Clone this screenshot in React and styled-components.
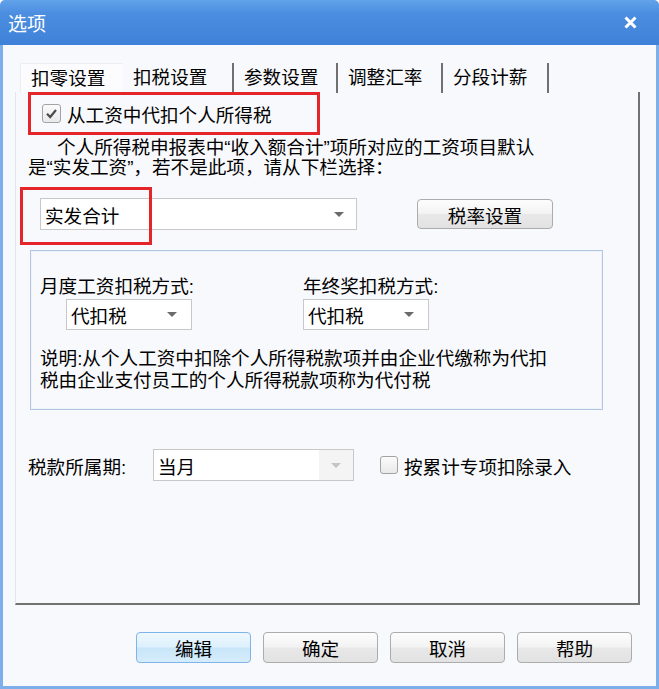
import React from 'react'
import styled, { createGlobalStyle } from 'styled-components'

const GlobalStyle = createGlobalStyle`
  html, body {
    margin: 0;
    padding: 0;
    background: #ffffff;
  }
  body {
    font-family: "Liberation Sans", "Noto Sans CJK SC", sans-serif;
    font-size: 18.6px;
    color: #000;
  }
  * {
    box-sizing: border-box;
  }
`

const Window = styled.div`
  width: 659px;
  height: 689px;
  display: flex;
  flex-direction: column;
  background: #f8f9fc;
  border-radius: 5px 5px 0 0;
  overflow: hidden;
`

const TitleBar = styled.div`
  height: 45px;
  flex: none;
  display: flex;
  align-items: center;
  justify-content: space-between;
  padding: 0 22px 0 8px;
  background: linear-gradient(#62a2ea, #4b8ee0 30%, #3f81d8);
  color: #fff;
  font-size: 19px;
`

const Body = styled.div`
  flex: 1;
  display: flex;
  flex-direction: column;
  border: 3px solid #7db0ea;
  border-top: none;
  padding: 17px 16px 0 12px;
`

const TabStrip = styled.div`
  display: flex;
  height: 30px;
  padding-left: 5px;
`

const Tab = styled.div`
  width: ${(p) => p.$w}px;
  height: 30px;
  line-height: 30px;
  padding-left: 10px;
  white-space: nowrap;
  border-right: ${(p) => (p.$first ? 'none' : '2px solid #707070')};
  border-top: ${(p) => (p.$first ? '1px solid #eceef2' : 'none')};
  border-left: ${(p) => (p.$first ? '1px solid #eceef2' : 'none')};
  background: ${(p) => (p.$first ? '#fcfcfe' : 'transparent')};
  margin-top: 1px;
`

const Panel = styled.div`
  height: 513px;
  display: flex;
  flex-direction: column;
  border-left: 1px solid #e2e5ea;
  border-right: 2px solid #727272;
  border-bottom: 2px solid #727272;
`

const CheckRow = styled.div`
  margin-left: 12px;
  width: 292px;
  height: 43px;
  border: 3px solid #e42529;
  display: flex;
  align-items: center;
  padding-left: 11px;
  gap: 6px;
`

const Box = styled.span`
  width: ${(p) => p.$size}px;
  height: ${(p) => p.$size}px;
  flex: none;
  border: 1px solid #a3a3a3;
  border-radius: 3px;
  background: linear-gradient(#fbfbfb, #e9e9e9);
  display: flex;
  align-items: center;
  justify-content: center;
`

const Intro = styled.p`
  margin: 3px 0 0 12px;
  line-height: 20px;
  text-indent: 29px;
  white-space: nowrap;
`

const ComboRow = styled.div`
  position: relative;
  display: flex;
  align-items: center;
  margin: 20px 0 0 24px;
`

const Highlight = styled.div`
  position: absolute;
  left: ${(p) => p.$x}px;
  top: ${(p) => p.$y}px;
  width: ${(p) => p.$w}px;
  height: ${(p) => p.$h}px;
  border: 3px solid #e42529;
  pointer-events: none;
`

const Combo = styled.div`
  width: ${(p) => p.$w}px;
  height: ${(p) => p.$h}px;
  flex: none;
  display: flex;
  align-items: center;
  padding-left: 4px;
  border: 1px solid #c8c8c8;
  background: #ffffff;
  white-space: nowrap;
  margin-left: ${(p) => p.$indent || 0}px;
`

const ArrowZone = styled.span`
  margin-left: auto;
  width: ${(p) => p.$w}px;
  height: 100%;
  display: flex;
  align-items: center;
  justify-content: center;
  background: ${(p) => (p.$disabled ? '#f4f4f4' : 'transparent')};
`

const Arrow = styled.span`
  width: 0;
  height: 0;
  border-left: 5px solid transparent;
  border-right: 5px solid transparent;
  border-top: 5px solid ${(p) => (p.$disabled ? '#c4c4c4' : '#6b6b6b')};
`

const Button = styled.button`
  width: ${(p) => p.$w}px;
  height: ${(p) => p.$h}px;
  flex: none;
  padding: 0;
  font: inherit;
  color: #000;
  border-radius: 4px;
  border: 1px solid ${(p) => (p.$focus ? '#7eb4ea' : '#acacac')};
  background: ${(p) =>
    p.$focus
      ? 'linear-gradient(#eef8fe, #ddf0fd 48%, #c8e5f9 52%, #d6ecfb)'
      : 'linear-gradient(#fdfdfd, #f3f3f3 48%, #e8e8e8 52%, #e2e2e2)'};
  margin-left: ${(p) => p.$ml || 0}px;
`

const GroupBox = styled.div`
  margin: 20px 0 0 14px;
  width: 573px;
  height: 160px;
  border: 1px solid #b3c7e3;
  box-shadow: inset 0 0 0 1px #eef3fa;
  padding: 25px 0 0 9px;
`

const Columns = styled.div`
  display: grid;
  grid-template-columns: 263px 1fr;
`

const Field = styled.div`
  display: flex;
  flex-direction: column;
  align-items: flex-start;
`

const FieldLabel = styled.div`
  line-height: 22px;
  margin-bottom: 1px;
  white-space: nowrap;
`

const Note = styled.div`
  margin-top: 18px;
  line-height: 22px;
  white-space: nowrap;
`

const BottomRow = styled.div`
  display: flex;
  align-items: center;
  margin: 39px 0 0 12px;
`

const RowLabel = styled.span`
  width: 125px;
  flex: none;
  white-space: nowrap;
`

const CheckOption = styled.label`
  display: flex;
  align-items: center;
  gap: 6px;
  margin-left: 26px;
  white-space: nowrap;
`

const Footer = styled.div`
  display: flex;
  justify-content: flex-end;
  gap: 12px;
  margin-top: 27px;
  padding-right: 8px;
`

const tabs = [
  { name: '扣零设置', w: 103 },
  { name: '扣税设置', w: 111 },
  { name: '参数设置', w: 104 },
  { name: '调整汇率', w: 105 },
  { name: '分段计薪', w: 106 },
]

function Checkbox({ checked, size }) {
  return (
    <Box $size={size}>
      {checked && (
        <svg width="13" height="13" viewBox="0 0 13 13">
          <path d="M2 6.8 L5.2 10 L11 3" fill="none" stroke="#4b4b4b" strokeWidth="2.2" />
        </svg>
      )}
    </Box>
  )
}

function Select({ value, w, h, arrow, indent, disabled }) {
  return (
    <Combo $w={w} $h={h} $indent={indent}>
      {value}
      <ArrowZone $w={arrow} $disabled={disabled}>
        <Arrow $disabled={disabled} />
      </ArrowZone>
    </Combo>
  )
}

export default function App() {
  return (
    <>
      <GlobalStyle />
      <Window>
        <TitleBar>
          <span>选项</span>
          <svg width="13" height="13" viewBox="0 0 13 13">
            <path d="M1.5 1.5 L11.5 11.5 M11.5 1.5 L1.5 11.5" stroke="#fff" strokeWidth="3" />
          </svg>
        </TitleBar>
        <Body>
          <TabStrip>
            {tabs.map((t, i) => (
              <Tab key={t.name} $w={t.w} $first={i === 0}>
                {t.name}
              </Tab>
            ))}
          </TabStrip>
          <Panel>
            <CheckRow>
              <Checkbox checked size={19} />
              <span>从工资中代扣个人所得税</span>
            </CheckRow>
            <Intro>
              个人所得税申报表中“收入额合计”项所对应的工资项目默认
              <br />
              是“实发工资”，若不是此项，请从下栏选择：
            </Intro>
            <ComboRow>
              <Select value="实发合计" w={317} h={32} arrow={34} />
              <Button $w={136} $h={30} $ml={60}>
                税率设置
              </Button>
              <Highlight $x={-20} $y={-11} $w={132} $h={58} />
            </ComboRow>
            <GroupBox>
              <Columns>
                <Field>
                  <FieldLabel>月度工资扣税方式:</FieldLabel>
                  <Select value="代扣税" w={126} h={31} arrow={38} indent={26} />
                </Field>
                <Field>
                  <FieldLabel>年终奖扣税方式:</FieldLabel>
                  <Select value="代扣税" w={126} h={31} arrow={38} />
                </Field>
              </Columns>
              <Note>
                说明:从个人工资中扣除个人所得税款项并由企业代缴称为代扣
                <br />
                税由企业支付员工的个人所得税款项称为代付税
              </Note>
            </GroupBox>
            <BottomRow>
              <RowLabel>税款所属期:</RowLabel>
              <Select value="当月" w={201} h={32} arrow={34} disabled />
              <CheckOption>
                <Checkbox size={18} />
                <span>按累计专项扣除录入</span>
              </CheckOption>
            </BottomRow>
          </Panel>
          <Footer>
            <Button $w={115} $h={31} $focus>
              编辑
            </Button>
            <Button $w={115} $h={31}>
              确定
            </Button>
            <Button $w={115} $h={31}>
              取消
            </Button>
            <Button $w={115} $h={31}>
              帮助
            </Button>
          </Footer>
        </Body>
      </Window>
    </>
  )
}
